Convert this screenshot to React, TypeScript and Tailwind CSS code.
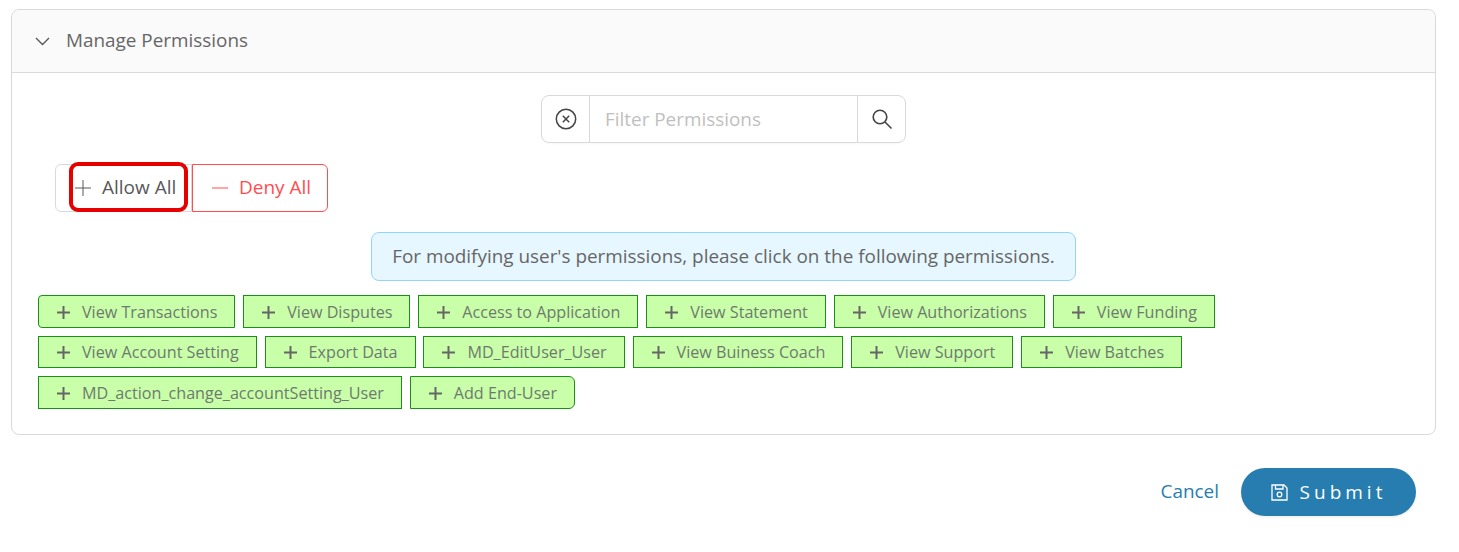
const rows = [
  ['View Transactions', 'View Disputes', 'Access to Application', 'View Statement', 'View Authorizations', 'View Funding'],
  ['View Account Setting', 'Export Data', 'MD_EditUser_User', 'View Buiness Coach', 'View Support', 'View Batches'],
  ['MD_action_change_accountSetting_User', 'Add End-User'],
];

function PlusIcon({ size, stroke, className = '' }: { size: number; stroke: number; className?: string }) {
  return (
    <svg width={size} height={size} viewBox={`0 0 ${size} ${size}`} className={`shrink-0 ${className}`} stroke="currentColor" strokeWidth={stroke} fill="none">
      <path d={`M0 ${size / 2}H${size}M${size / 2} 0V${size}`} />
    </svg>
  );
}

function PermissionTag({ label, className = '' }: { label: string; className?: string }) {
  return (
    <span className={`flex h-[32.5px] items-center border border-[#1a8f1a] bg-[#c8ffa8] pl-[18px] pr-[17px] pt-[1.5px] text-[16.15px] text-[#6f7a6f] ${className}`}>
      <PlusIcon size={13} stroke={2} className="mr-[12px] text-[#666666]" />
      {label}
    </span>
  );
}

export default function App() {
  return (
    <div className="h-[552px] w-[1459px] overflow-hidden bg-white pl-[11px] pt-[9px] font-['Open_Sans',sans-serif] text-[#595959]">
      <div className="w-[1425px] rounded-[8px] border border-[#d9d9d9]">
        <div className="flex h-[63px] items-center rounded-t-[8px] border-b border-[#d9d9d9] bg-[#fafafa] pb-[2px] pl-[23px] text-[18.9px] text-[#666666]">
          <svg width="15" height="9" viewBox="0 0 15 9" fill="none" stroke="#555555" strokeWidth="1.3" className="mr-[16px] mt-[2px]">
            <path d="M1 1l6.5 6.5L14 1" />
          </svg>
          Manage Permissions
        </div>

        <div className="h-[361px] pt-[22px]">
          <div className="flex justify-center">
            <div className="flex h-[48px] w-[365px] rounded-[8px] border border-[#d9d9d9] shadow-[0_1px_2px_rgba(0,0,0,0.03)]">
              <div className="flex w-[48px] items-center justify-center border-r border-[#d9d9d9]">
                <svg width="22" height="22" viewBox="0 0 22 22" fill="none" stroke="#444444" strokeWidth="1.5">
                  <circle cx="11" cy="11" r="9.7" />
                  <path d="M7.8 7.8l6.4 6.4M14.2 7.8l-6.4 6.4" />
                </svg>
              </div>
              <div className="flex flex-1 items-center pl-[15px] text-[18.9px] text-[#bfbfbf]">Filter Permissions</div>
              <div className="flex w-[48px] items-center justify-center border-l border-[#d9d9d9]">
                <svg width="22" height="22" viewBox="0 0 22 22" fill="none" stroke="#444444" strokeWidth="1.6">
                  <circle cx="9" cy="9" r="6.8" />
                  <path d="M14 14l6.5 6.5" />
                </svg>
              </div>
            </div>
          </div>

          <div className="ml-[43px] mt-[21px] flex text-[19px]">
            <div className="flex h-[48px] w-[137px] items-center rounded-l-[6px] border border-[#d9d9d9] pb-[2px] pl-[19px] text-[#595959]">
              <PlusIcon size={16} stroke={1} className="mr-[11px] mt-[2px]" />
              Allow All
            </div>
            <div className="flex h-[48px] w-[136px] items-center rounded-r-[6px] border border-[#ff4d4f] pb-[2px] pl-[19px] text-[#ff4d4f]">
              <svg width="16" height="2" viewBox="0 0 16 2" stroke="currentColor" strokeWidth="1" className="mr-[11px] mt-[1px]">
                <path d="M0 1H16" />
              </svg>
              Deny All
            </div>
          </div>

          <div className="mt-[20px] flex justify-center">
            <div className="flex h-[49px] w-[705px] items-center justify-center rounded-[8px] border border-[#91d5ff] bg-[#e6f7ff] text-[18.9px] text-[#666666]">
              For modifying user's permissions, please click on the following permissions.
            </div>
          </div>

          <div className="ml-[26px] mt-[14px] flex flex-col gap-[8px]">
            {rows.map((row, r) => (
              <div key={r} className="flex gap-[7.85px]">
                {row.map((label, i) => (
                  <PermissionTag
                    key={label}
                    label={label}
                    className={r === 0 && i === 0 ? 'rounded-l-[4px]' : r === 2 && i === 1 ? 'rounded-r-[6px]' : ''}
                  />
                ))}
              </div>
            ))}
          </div>
        </div>
      </div>

      <div className="mt-[33px] flex w-[1405px] items-center justify-end">
        <span className="mr-[22px] pb-[1px] text-[18.9px] text-[#277db0]">Cancel</span>
        <div className="flex h-[48px] w-[175px] items-center justify-center rounded-full bg-[#277db0] text-[19px] tracking-[4px] text-white shadow-[0_2px_2px_rgba(0,0,0,0.05)]">
          <svg width="17" height="17" viewBox="0 0 17 17" fill="none" stroke="currentColor" strokeWidth="1.3" className="mr-[12px]">
            <path d="M1 1h12l3 3v12H1z" />
            <path d="M4.5 1v4h7.5V1" />
            <circle cx="8.5" cy="10.5" r="2.3" />
          </svg>
          Submit
        </div>
      </div>

      {/* red highlight drawn over the screenshot */}
      <div className="absolute left-[68.5px] top-[162px] h-[50px] w-[119.5px] rounded-[9px] border-[4px] border-[#e60000]" />
    </div>
  );
}
